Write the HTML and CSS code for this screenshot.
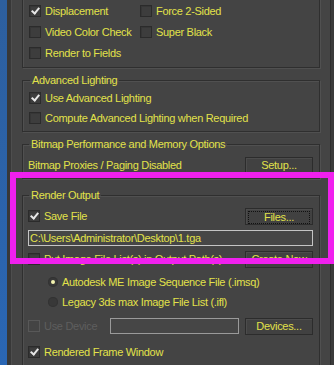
FILE: index.html
```html
<!DOCTYPE html>
<html lang="en">
<head>
    <meta charset="UTF-8">
    <title>Render Setup - Common</title>
    <link rel="stylesheet" href="styles.css">
</head>
<body>
    <div class="strip"></div>
    <div class="gutter"></div>
    <div class="rollout">
        <!-- Options (top cut off) -->
        <fieldset class="group group-top">
            <div class="cols">
                <div class="col">
                    <label class="row"><span class="check on"></span>Displacement</label>
                    <label class="row"><span class="check"></span>Video Color Check</label>
                    <label class="row"><span class="check"></span>Render to Fields</label>
                </div>
                <div class="col">
                    <label class="row"><span class="check"></span>Force 2-Sided</label>
                    <label class="row"><span class="check"></span>Super Black</label>
                </div>
            </div>
        </fieldset>

        <fieldset class="group group-light">
            <legend>Advanced Lighting</legend>
            <label class="row"><span class="check on"></span>Use Advanced Lighting</label>
            <label class="row"><span class="check"></span>Compute Advanced Lighting when Required</label>
        </fieldset>

        <fieldset class="group group-bitmap">
            <legend>Bitmap Performance and Memory Options</legend>
            <div class="row spread">
                <span>Bitmap Proxies / Paging Disabled</span>
                <button class="btn">Setup...</button>
            </div>
        </fieldset>

        <fieldset class="group group-output">
            <legend>Render Output</legend>
            <div class="row spread save">
                <label class="row"><span class="check on"></span>Save File</label>
                <button class="btn focus"><span>Files...</span></button>
            </div>
            <div class="field path">C:\Users\Administrator\Desktop\1.tga</div>
            <div class="row spread list">
                <label class="row"><span class="check"></span>Put Image File List(s) in Output Path(s)</label>
                <button class="btn">Create Now</button>
            </div>
            <label class="row indent first-radio"><span class="radio on"></span>Autodesk ME Image Sequence File (.imsq)</label>
            <label class="row indent"><span class="radio"></span>Legacy 3ds max Image File List (.ifl)</label>
            <div class="row spread device">
                <label class="row off"><span class="check"></span>Use Device</label>
                <div class="field dev"></div>
                <button class="btn">Devices...</button>
            </div>
            <label class="row frame"><span class="check on"></span>Rendered Frame Window</label>
        </fieldset>
    </div>
    <div class="edge"></div>

    <div class="highlight"></div>
</body>
</html>
```

FILE: styles.css
```css
body {
    margin: 0;
    height: 365px;
    overflow: hidden;
    display: flex;
    background: #3c3c3c;
    font-family: 'Liberation Sans', Arial, sans-serif;
    font-size: 11px;
    letter-spacing: -0.3px;
    color: #e2e24a;
}

.strip {
    width: 7px;
    background: linear-gradient(#2d5f9e, #2a66b4);
}

.gutter {
    width: 4px;
    background: #383838;
}

.rollout {
    width: 298px;
    padding: 0 10px;
    border-left: 1px solid #4e4e4e;
    border-right: 1px solid #2e2e2e;
    background: #444;
    display: flex;
    flex-direction: column;
}

.edge {
    flex: 1;
    background: #3b3b3b;
}

/* Group boxes */
.group {
    flex-shrink: 0;
    margin: 0;
    padding: 1px 6px 3px 6px;
    border: 1px solid #2f2f2f;
    box-shadow: inset 1px 1px 0 #505050, 1px 1px 0 #505050;
    min-width: 0;
}

.group legend {
    padding: 0 2px;
    margin-left: 1px;
    line-height: 14px;
}

.group-top {
    margin-top: -12px;
    padding-top: 11px;
    padding-bottom: 4px;
}

.group-top .row {
    height: 21px;
}

.group-light {
    margin-top: 5px;
}

.group-bitmap {
    margin-top: 5px;
    padding: 4px 6px 3px 5px;
}

.group-output {
    margin-top: 9px;
    padding: 4px 6px 12px 5px;
}

.cols {
    display: flex;
}

.col {
    width: 111px;
}

.row {
    display: flex;
    align-items: center;
    flex-shrink: 0;
    height: 20px;
    white-space: nowrap;
}

.spread {
    justify-content: space-between;
}

.indent {
    padding-left: 20px;
}

.list {
    margin-top: 3px;
}

.first-radio {
    margin-top: 3px;
}

.device {
    margin-top: 4px;
}

.frame {
    margin-top: 6px;
}

/* Checkbox and radio */
.check {
    width: 10px;
    height: 10px;
    margin-right: 4px;
    border: 1px solid #2b2b2b;
    background: #3d3d3d;
    box-shadow: inset 1px 1px 0 #363636;
    position: relative;
}

.check.on::after {
    content: "";
    position: absolute;
    left: 3px;
    top: 0;
    width: 3px;
    height: 6px;
    border: solid #e6e6e6;
    border-width: 0 2px 2px 0;
    transform: rotate(40deg);
}

.radio {
    width: 10px;
    height: 10px;
    margin-right: 4px;
    border-radius: 50%;
    background: #383838;
    box-shadow: inset 0 0 0 1px #333;
    position: relative;
}

.radio.on::after {
    content: "";
    position: absolute;
    left: 3px;
    top: 3px;
    width: 4px;
    height: 4px;
    border-radius: 50%;
    background: #f4f4b0;
}

.off {
    color: #5e5e5e;
}

.off .check {
    border-color: #585858;
    background: #444;
    box-shadow: none;
}

/* Buttons and fields */
.btn {
    width: 68px;
    height: 17px;
    padding: 0;
    font-family: inherit;
    font-size: 11px;
    letter-spacing: -0.3px;
    color: #e2e24a;
    background: #414141;
    border: 1px solid #2c2c2c;
    box-shadow: inset 1px 1px 0 #4c4c4c;
}

.btn.focus span {
    display: block;
    margin: 2px;
    line-height: 11px;
    border: 1px dotted #111;
}

.field {
    height: 14px;
    border: 1px solid #c4c4c4;
    background: #464646;
    line-height: 14px;
}

.path {
    flex-shrink: 0;
    margin-top: 4px;
    padding-left: 1px;
}

.dev {
    width: 127px;
    margin-left: auto;
    margin-right: 6px;
    border-color: #9a9a9a;
}

/* Magenta annotation frame */
.highlight {
    position: absolute;
    left: 10px;
    top: 172px;
    width: 324px;
    height: 92px;
    box-sizing: border-box;
    border: 6px solid #f020ee;
}
```
